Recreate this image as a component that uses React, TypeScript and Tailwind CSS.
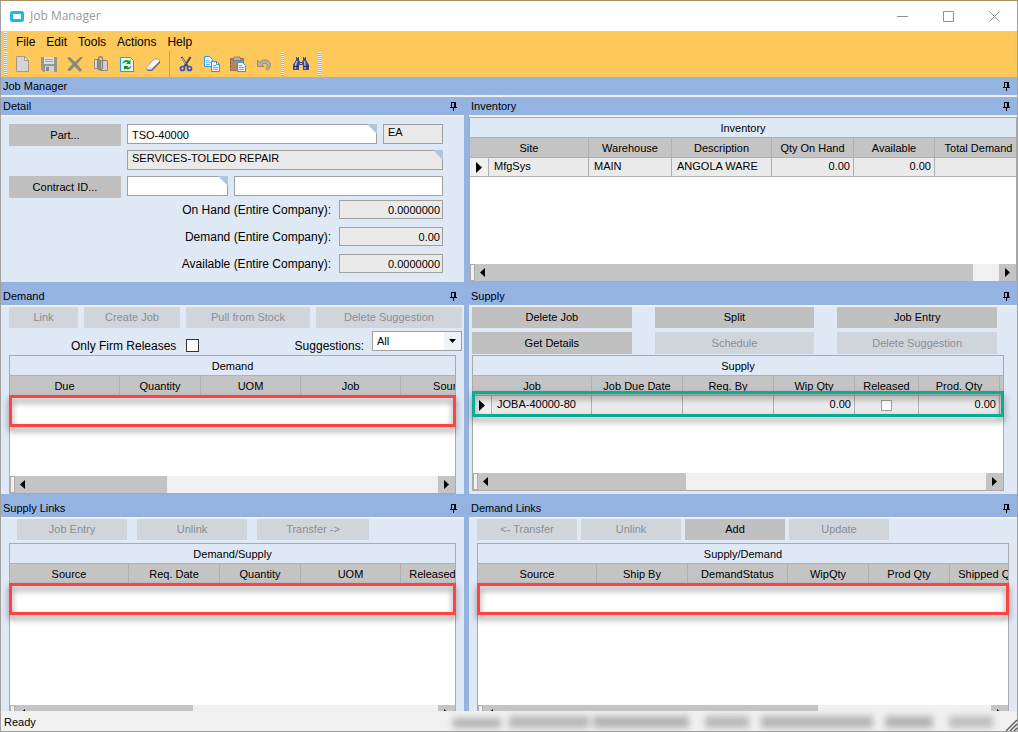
import { useState, type ReactNode } from 'react'
import clsx from 'clsx'

interface Column {
  label: string
  width: number
}

/* Toolbar icons, 16x16 */
const NewIcon = () => (
  <svg width="16" height="16" viewBox="0 0 16 16">
    <path d="M1.5 .5h8l4 4v11h-12z" fill="#d4d4d4" stroke="#a39a8c" />
    <path d="M9.5 .5v4h4z" fill="#f4f4f4" stroke="#a39a8c" />
  </svg>
)

const SaveIcon = () => (
  <svg width="16" height="16" viewBox="0 0 16 16" shapeRendering="crispEdges">
    <path d="M0 1h16v15H2l-2-2z" fill="#989693" />
    <path d="M3 1h10v7H3z" fill="#dcdcdc" />
    <path d="M4 3.5h8M4 5.5h8" stroke="#a8a8a8" />
    <path d="M4 10h9v6H4z" fill="#d0d0d0" />
    <path d="M5 11h3v4H5z" fill="#858585" />
  </svg>
)

const DeleteIcon = () => (
  <svg width="16" height="16" viewBox="0 0 16 16">
    <path d="M0 2l3-1 5 5 5.5-5H16l-6 7 5 6-2 2-5.5-5.5L3 15l-3-1 5.5-6z" fill="#8b8882" />
  </svg>
)

const AttachIcon = () => (
  <svg width="16" height="16" viewBox="0 0 16 16" fill="none" stroke="#8b8986">
    <path d="M7.5 4.5h7v10h-7z" fill="#cfcfcf" />
    <path d="M1.500 3.500h5v9h-5z" fill="#dedede" />
    <path d="M4.500 4v7.500c0 3 5 3 5 0V3c0-3-4-3-4 0v7.500c0 1.500 2 1.500 2 0V4" strokeWidth="1.300" />
  </svg>
)

const RefreshIcon = () => (
  <svg width="16" height="16" viewBox="0 0 16 16">
    <path d="M1.5 1.5h10l3 3v11h-13z" fill="#e9f6ff" stroke="#1f9df0" />
    <path d="M3.500 8c0-3.500 4.500-5 6.500-3l1.500-1.500V8H7l1.500-1.500C7 5.500 5.500 6.500 3.500 8z" fill="#12a012" />
    <path d="M12.500 9c0 4-4 5-6 3.500L5 14v-4h4.500l-1.500 1.500c2 .5 3.500-.5 4.500-2.500z" fill="#0b8a0b" />
  </svg>
)

const EraserIcon = () => (
  <svg width="16" height="16" viewBox="0 0 16 16">
    <path d="M1 12l8-9h4l2 2-8 9.500H3z" fill="#fbfbfb" stroke="#9c9a98" />
    <path d="M15 5v2l-8 8H3l-1-2h4.500z" fill="#6d6d78" />
    <path d="M1.500 11.500l2-2.500 4 3-1 1.500H3z" fill="#e2e5f3" />
  </svg>
)

const CutIcon = () => (
  <svg width="16" height="16" viewBox="0 0 16 16" fill="none">
    <path d="M3.500 1L10 11M12.500 1L6 11" stroke="#4b4a50" strokeWidth="2" />
    <path d="M4 2l3.500 5.500" stroke="#d8dbe4" strokeWidth="1" />
    <circle cx="4.500" cy="12.500" r="2" stroke="#2c55c8" strokeWidth="1.700" />
    <circle cx="11.500" cy="12.500" r="2" stroke="#2c55c8" strokeWidth="1.700" />
  </svg>
)

const CopyIcon = () => (
  <svg width="16" height="16" viewBox="0 0 16 16" stroke="#2a98e8">
    <path d="M.5 .5h5l3 3v7h-8z" fill="#eef8ff" />
    <path d="M2 4.5h4M2 6.5h5M2 8.5h4" stroke="#7ab8ea" />
    <path d="M7.5 5.5h5l3 3v7h-8z" fill="#eef8ff" />
    <path d="M12.5 5.5v3h3" fill="none" />
    <path d="M9 9.5h3M9 11.5h5M9 13.5h5" stroke="#5ba9e6" />
  </svg>
)

const PasteIcon = () => (
  <svg width="16" height="16" viewBox="0 0 16 16">
    <path d="M.5 2.5h13v12H.5z" fill="#b8845e" stroke="#96714f" />
    <path d="M4 1h6l1 3.500H3z" fill="#b4b4b4" stroke="#6c6c6c" strokeWidth=".7" />
    <path d="M7.5 6.5h5l3 3v6h-8z" fill="#eef8ff" stroke="#2a98e8" />
    <path d="M9 9.5h3M9 11.5h5M9 13.5h5" stroke="#5ba9e6" />
  </svg>
)

const UndoIcon = () => (
  <svg width="16" height="16" viewBox="0 0 16 16">
    <path d="M1.500 4v6.500H8L6 8.500C8.500 6 12.500 7.500 11 11l-1 1.500 1.500 1.500C16 11 15 4.500 10 4 7.500 3.500 5 5 3.700 6.300z" fill="#b5aea3" stroke="#8d8577" strokeWidth=".9" />
  </svg>
)

const FindIcon = () => (
  <svg width="16" height="16" viewBox="0 0 16 16">
    <path d="M3 1h3v3l1 2h2l1-2V1h3v3l3 5v5h-6v-5H6v5H0V9l3-5z" fill="#3f4a86" />
    <path d="M4 5L2.500 9v4M11.500 5l.500 4v4" stroke="#aab5e6" strokeWidth="1.500" fill="none" />
    <path d="M0 10.5h6M10 10.5h6" stroke="#242d63" />
    <path d="M4 1.500h1M11 1.500h1M7 7.500h2" stroke="#c4cbee" />
  </svg>
)

const PinIcon = () => (
  <svg width="7" height="9" viewBox="0 0 7 9" shapeRendering="crispEdges">
    <path d="M1 0h5v6H1z" fill="#000" />
    <path d="M2 1h2v4H2z" fill="#94b3e0" />
    <path d="M0 5h7v1H0zM3 6h1v3H3z" fill="#000" />
  </svg>
)

const Grip = () => (
  <span className="my-px w-[3px] self-stretch bg-[repeating-linear-gradient(#f3f3f3_0_1px,#b0aca4_1px_2px)]" />
)

function WindowButton({ label, path }: { label: string; path: string }) {
  return (
    <button type="button" aria-label={label} className="flex w-[46px] justify-center">
      <svg width="11" height="11" viewBox="0 0 11 11" fill="none" stroke="#909090">
        <path d={path} />
      </svg>
    </button>
  )
}

function ToolButton({ label, children }: { label: string; children: ReactNode }) {
  return (
    <button type="button" aria-label={label} className="flex h-6 w-6 items-center justify-center">
      {children}
    </button>
  )
}

function PushButton({ children, disabled, className }: { children: ReactNode; disabled?: boolean; className?: string }) {
  return (
    <button
      type="button"
      disabled={disabled}
      className={clsx(
        'text-center text-[11px] leading-[21px] whitespace-nowrap',
        disabled ? 'bg-[#d0d5dc] text-[#8a8e96]' : 'bg-[#c0c0c0] text-black',
        className ?? 'h-[21px]',
      )}
    >
      {children}
    </button>
  )
}

function Panel({ title, tall, children }: { title: string; tall?: boolean; children: ReactNode }) {
  return (
    <section className="flex min-h-0 min-w-0 flex-col">
      <header
        className={clsx(
          'flex shrink-0 items-center justify-between border-b-2 border-[#f0f0f0] bg-[#94b3e0] pr-[7px] pl-[2px]',
          tall ? 'h-[25px] pt-[5px]' : 'h-5',
        )}
      >
        <h2 className="text-[11px] leading-[18px]">{title}</h2>
        <PinIcon />
      </header>
      <div className="flex min-h-0 flex-1 flex-col bg-[#dfe9f5]">{children}</div>
    </section>
  )
}

function TextField({
  label,
  value = '',
  readOnly,
  corner,
  className,
}: {
  label: string
  value?: string
  readOnly?: boolean
  corner?: boolean
  className?: string
}) {
  return (
    <div className={clsx('relative h-5', className)}>
      <input
        type="text"
        aria-label={label}
        defaultValue={value}
        readOnly={readOnly}
        className={clsx(
          'block h-full w-full border border-[#a0a0a0] px-1 text-[11px] leading-[18px] outline-none',
          readOnly ? 'bg-[#eaeaea] pb-1' : 'bg-white pt-[2px]',
        )}
      />
      {corner && (
        <span className="absolute top-0 right-0 h-[10px] w-[10px] bg-[#b0c4de] [clip-path:polygon(0_0,100%_0,100%_100%)]" />
      )}
    </div>
  )
}

function TotalField({ id, label, value }: { id: string; label: string; value: string }) {
  return (
    <div className="flex items-center justify-end gap-2">
      <label htmlFor={id} className="pt-px text-xs">
        {label}
      </label>
      <input
        id={id}
        type="text"
        readOnly
        defaultValue={value}
        className="h-[19px] w-[104px] border border-[#a0a0a0] bg-[#eaeaea] px-[2px] text-right text-[11px] outline-none"
      />
    </div>
  )
}

function ScrollBar({ thumb }: { thumb: number }) {
  return (
    <div className="flex h-[17px] shrink-0 bg-[#f0f0f0]">
      <span className="w-[5px] border border-[#adadad]" />
      <div className="min-w-0 flex-1">
        <div className="flex h-full items-center bg-[#c4c4c4] pl-[5px]" style={{ width: `${thumb}%` }}>
          <span className="h-[9px] w-[5px] bg-black [clip-path:polygon(100%_0,100%_100%,0_50%)]" />
        </div>
      </div>
      <span className="flex w-[17px] items-center justify-center bg-[#c4c4c4]">
        <span className="h-[9px] w-[5px] bg-black [clip-path:polygon(0_0,100%_50%,0_100%)]" />
      </span>
    </div>
  )
}

// The first column header also covers the row selector when there are rows
function DataGrid({
  title,
  columns,
  row,
  thumb,
  mark,
  className,
}: {
  title: string
  columns: Column[]
  row?: ReactNode[]
  thumb: number
  mark?: 'red' | 'green'
  className?: string
}) {
  const widths = columns.map((c) => c.width)
  if (row) widths.splice(0, 1, 19, widths[0] - 19)
  const total = widths.reduce((a, b) => a + b, 0)

  return (
    <div className={clsx('relative flex flex-col', className)}>
      <div className="flex min-h-0 flex-1 flex-col border border-[#ababab] bg-white">
        <div className="h-5 shrink-0 border-b border-[#b0b0b0] bg-[#dfe9f5] text-center text-[11px] leading-[20px]">
          {title}
        </div>
        <div className="min-h-0 flex-1 overflow-hidden">
          <table aria-label={title} className="table-fixed border-separate border-spacing-0 text-[11px]" style={{ width: total }}>
            <colgroup>
              {widths.map((w, i) => (
                <col key={i} style={{ width: w }} />
              ))}
            </colgroup>
            <thead>
              <tr>
                {columns.map((c, i) => (
                  <th
                    key={c.label}
                    colSpan={row && i === 0 ? 2 : 1}
                    className="h-5 border-r border-b border-[#b0b0b0] bg-[#c4c4c4] px-0 pt-[2px] pb-0 leading-[17px] font-normal whitespace-nowrap"
                  >
                    {c.label}
                  </th>
                ))}
              </tr>
            </thead>
            {row && (
              <tbody>
                <tr>
                  <td className="h-[19px] border-r border-b border-[#b0b0b0] bg-[#f0f0f0] px-0 pt-px pb-0">
                    <span className="mx-auto block h-[11px] w-[6px] bg-black [clip-path:polygon(0_0,100%_50%,0_100%)]" />
                  </td>
                  {row.map((cell, i) => (
                    <td
                      key={i}
                      className={clsx(
                        'h-[19px] overflow-hidden border-r border-b border-[#b0b0b0] bg-[#eaeaea] px-[3px] pt-0 pb-[2px] leading-[16px] whitespace-nowrap',
                        cell === '0.00' ? 'text-right' : typeof cell === 'string' ? 'pl-[5px] text-left' : 'text-center',
                      )}
                    >
                      {cell}
                    </td>
                  ))}
                </tr>
              </tbody>
            )}
          </table>
        </div>
        <ScrollBar thumb={thumb} />
      </div>
      {mark === 'red' && (
        <span className="absolute inset-x-0 top-10 h-8 border-[3px] border-[#ff4343] drop-shadow-[0_4px_3px_rgba(0,0,0,0.5)]" />
      )}
      {mark === 'green' && (
        <span className="absolute inset-x-0 top-9 h-[26px] border-[3px] border-[#08ae91] drop-shadow-[0_4px_3px_rgba(0,0,0,0.5)]" />
      )}
    </div>
  )
}

const inventoryColumns = [
  { label: 'Site', width: 119 },
  { label: 'Warehouse', width: 83 },
  { label: 'Description', width: 100 },
  { label: 'Qty On Hand', width: 82 },
  { label: 'Available', width: 81 },
  { label: 'Total Demand', width: 88 },
]

const demandColumns = [
  { label: 'Due', width: 110 },
  { label: 'Quantity', width: 81 },
  { label: 'UOM', width: 100 },
  { label: 'Job', width: 100 },
  { label: 'Source', width: 100 },
]

const supplyColumns = [
  { label: 'Job', width: 119 },
  { label: 'Job Due Date', width: 91 },
  { label: 'Req. By', width: 91 },
  { label: 'Wip Qty', width: 81 },
  { label: 'Released', width: 64 },
  { label: 'Prod. Qty', width: 81 },
  { label: '', width: 60 },
]

const supplyLinkColumns = [
  { label: 'Source', width: 119 },
  { label: 'Req. Date', width: 91 },
  { label: 'Quantity', width: 81 },
  { label: 'UOM', width: 100 },
  { label: 'Released', width: 64 },
]

const demandLinkColumns = [
  { label: 'Source', width: 119 },
  { label: 'Ship By', width: 91 },
  { label: 'DemandStatus', width: 100 },
  { label: 'WipQty', width: 81 },
  { label: 'Prod Qty', width: 81 },
  { label: 'Shipped Qty', width: 78 },
]

export default function App() {
  const [firmOnly, setFirmOnly] = useState(false)

  return (
    <div className="flex h-screen flex-col overflow-hidden border border-[#a0a0a0] border-t-[#a8925f] bg-[#94b3e0] font-['Liberation_Sans',Arial,sans-serif] text-black">
      {/* Title bar */}
      <div className="flex h-[30px] shrink-0 items-center bg-white pl-[9px]">
        <svg width="14" height="11" viewBox="0 0 14 11">
          <rect x="1.5" y="1.5" width="11" height="8" rx="1" fill="#fff" stroke="#1ab7ea" strokeWidth="3" />
        </svg>
        <h1 className="ml-[6px] flex-1 font-['Open_Sans',sans-serif] text-xs text-[#999]">Job Manager</h1>
        <WindowButton label="Minimize" path="M0 5.500h11" />
        <WindowButton label="Maximize" path="M.5 .5h10v10H.5z" />
        <WindowButton label="Close" path="M.5 .5l10 10M10.500 .5l-10 10" />
      </div>

      {/* Menu and toolbar */}
      <div className="shrink-0 bg-[#ffc85a]">
        <nav className="flex h-5 items-center gap-[11px] pl-[3px] text-xs">
          <Grip />
          <div className="-ml-[2px] flex gap-[11px] pt-px">
            <button type="button">File</button>
            <button type="button">Edit</button>
            <button type="button">Tools</button>
            <button type="button">Actions</button>
            <button type="button">Help</button>
          </div>
        </nav>
        <div className="flex h-[26px] items-center gap-[2px] pl-[3px]">
          <Grip />
          <div className="flex gap-[2px] pl-[2px]">
            <ToolButton label="New"><NewIcon /></ToolButton>
            <ToolButton label="Save"><SaveIcon /></ToolButton>
            <ToolButton label="Delete"><DeleteIcon /></ToolButton>
            <ToolButton label="Attachment"><AttachIcon /></ToolButton>
            <ToolButton label="Refresh"><RefreshIcon /></ToolButton>
            <ToolButton label="Clear"><EraserIcon /></ToolButton>
          </div>
          <span className="mx-[2px] w-px self-stretch bg-[#a9a294]" />
          <div className="flex gap-[2px]">
            <ToolButton label="Cut"><CutIcon /></ToolButton>
            <ToolButton label="Copy"><CopyIcon /></ToolButton>
            <ToolButton label="Paste"><PasteIcon /></ToolButton>
            <ToolButton label="Undo"><UndoIcon /></ToolButton>
          </div>
          <span className="w-px" />
          <Grip />
          <span className="w-px" />
          <ToolButton label="Search"><FindIcon /></ToolButton>
          <span className="w-px" />
          <Grip />
        </div>
      </div>

      <header className="flex h-5 shrink-0 items-center justify-between border-b-2 border-[#f0f0f0] pr-[7px] pl-[2px] text-[11px] leading-[18px]">
        Job Manager
        <PinIcon />
      </header>

      <main className="grid min-h-0 flex-1 grid-cols-[463fr_548fr] grid-rows-[185px_212px_minmax(0,1fr)] gap-x-[5px]">
        <Panel title="Detail">
          <div className="flex flex-col gap-1 pt-[7px] pr-[21px] pl-2">
            <div className="flex gap-[6px]">
              <PushButton className="h-[22px] w-28 shrink-0">Part...</PushButton>
              <TextField label="Part" value="TSO-40000" corner className="flex-1" />
              <TextField label="Unit" value="EA" readOnly className="w-[60px]" />
            </div>
            <div className="h-[22px] pl-[118px]">
              <TextField label="Part description" value="SERVICES-TOLEDO REPAIR" readOnly corner />
            </div>
            <div className="flex gap-[6px]">
              <PushButton className="h-[22px] w-28 shrink-0">Contract ID...</PushButton>
              <TextField label="Contract ID" corner className="w-[101px]" />
              <TextField label="Contract description" className="flex-1" />
            </div>
          </div>
          <div className="mt-[2px] flex flex-col gap-2 pr-[21px]">
            <TotalField id="on-hand" label="On Hand (Entire Company):" value="0.0000000" />
            <TotalField id="demand" label="Demand (Entire Company):" value="0.00" />
            <TotalField id="available" label="Available (Entire Company):" value="0.0000000" />
          </div>
        </Panel>

        <Panel title="Inventory">
          <DataGrid
            title="Inventory"
            columns={inventoryColumns}
            row={['MfgSys', 'MAIN', 'ANGOLA WARE', '0.00', '0.00', '']}
            thumb={95}
            className="flex-1"
          />
        </Panel>

        <Panel title="Demand" tall>
          <div className="flex gap-[6px] pr-[2px] pl-2">
            <PushButton disabled className="h-[21px] w-[69px]">Link</PushButton>
            <PushButton disabled className="h-[21px] w-24">Create Job</PushButton>
            <PushButton disabled className="h-[21px] w-[124px]">Pull from Stock</PushButton>
            <PushButton disabled className="h-[21px] flex-1">Delete Suggestion</PushButton>
          </div>
          <div className="flex h-[27px] items-start pt-[3px] pr-[2px] pl-[70px] text-xs">
            <label htmlFor="firm" className="pt-[7px]">Only Firm Releases</label>
            <input
              id="firm"
              type="checkbox"
              checked={firmOnly}
              onChange={(e) => setFirmOnly(e.target.checked)}
              className="mt-2 ml-[10px] h-[13px] w-[13px] appearance-none border border-[#333] bg-white checked:bg-[#333]"
            />
            <label htmlFor="suggestions" className="ml-auto pt-[7px]">Suggestions:</label>
            <div className="relative ml-2">
              <select
                id="suggestions"
                className="block h-5 w-[90px] appearance-none border border-[#a0a0a0] bg-white pl-1 text-[11px] outline-none"
              >
                <option>All</option>
              </select>
              <span className="pointer-events-none absolute inset-y-px right-px flex w-[17px] items-center justify-center bg-[#eef3fa]">
                <span className="h-[4px] w-[7px] bg-black [clip-path:polygon(0_0,100%_0,50%_100%)]" />
              </span>
            </div>
          </div>
          <DataGrid title="Demand" columns={demandColumns} thumb={36} mark="red" className="mr-2 ml-2 flex-1" />
        </Panel>

        <Panel title="Supply" tall>
          <div className="grid grid-cols-3 gap-x-[23px] gap-y-1 pr-5 pl-[3px]">
            <PushButton>Delete Job</PushButton>
            <PushButton>Split</PushButton>
            <PushButton>Job Entry</PushButton>
            <PushButton className="h-[22px]">Get Details</PushButton>
            <PushButton disabled className="h-[22px]">Schedule</PushButton>
            <PushButton disabled className="h-[22px]">Delete Suggestion</PushButton>
          </div>
          <DataGrid
            title="Supply"
            columns={supplyColumns}
            row={[
              'JOBA-40000-80',
              '',
              '',
              '0.00',
              <input
                type="checkbox"
                aria-label="Released"
                className="mx-auto mt-[2px] block h-[11px] w-[11px] appearance-none border border-[#a0a0a0] bg-white checked:bg-[#a0a0a0]"
              />,
              '0.00',
              '',
            ]}
            thumb={41}
            mark="green"
            className="mt-px mr-[13px] mb-[3px] ml-[3px] flex-1"
          />
        </Panel>

        <Panel title="Supply Links" tall>
          <div className="flex gap-[10px] pl-4">
            <PushButton disabled className="h-[21px] w-[110px]">Job Entry</PushButton>
            <PushButton disabled className="h-[21px] w-[110px]">Unlink</PushButton>
            <PushButton disabled className="h-[21px] w-28">Transfer -&gt;</PushButton>
          </div>
          <DataGrid title="Demand/Supply" columns={supplyLinkColumns} thumb={42} mark="red" className="mt-[3px] mr-2 -mb-3 ml-2 flex-1" />
        </Panel>

        <Panel title="Demand Links" tall>
          <div className="flex gap-1 pl-2">
            <PushButton disabled className="h-[21px] w-[100px]">&lt;- Transfer</PushButton>
            <PushButton disabled className="h-[21px] w-[100px]">Unlink</PushButton>
            <PushButton className="h-[21px] w-[100px]">Add</PushButton>
            <PushButton disabled className="h-[21px] w-[100px]">Update</PushButton>
          </div>
          <DataGrid title="Supply/Demand" columns={demandLinkColumns} thumb={66} mark="red" className="mt-[3px] mr-2 -mb-3 ml-2 flex-1" />
        </Panel>
      </main>

      {/* Status bar */}
      <footer className="relative z-10 flex h-5 shrink-0 items-center justify-between bg-[#f0f0f0] pl-[3px]">
        <span className="pt-[2px] text-[11px]">Ready</span>
        <div className="flex h-full items-end">
          <div className="mr-3 mb-[3px] flex items-end gap-1 blur-[3px]">
            <span className="h-2.5 w-12 bg-[#b4b4b4]" />
            <span className="ml-1 h-3 w-20 bg-[#b8b8b8]" />
            <span className="h-3 w-24 bg-[#b4b4b4]" />
            <span className="ml-3 h-3 w-11 bg-[#bababa]" />
            <span className="ml-2 h-3 w-[112px] bg-[#b6b6b6]" />
            <span className="ml-2 h-3 w-12 bg-[#b4b4b4]" />
            <span className="ml-3 h-3 w-11 bg-[#c0c0c0]" />
          </div>
          <svg width="12" height="12" viewBox="0 0 12 12" stroke="#555" strokeWidth="1.300">
            <path d="M1 12L12 1M5 12l7-7M9 12l3-3" />
          </svg>
        </div>
      </footer>
    </div>
  )
}
